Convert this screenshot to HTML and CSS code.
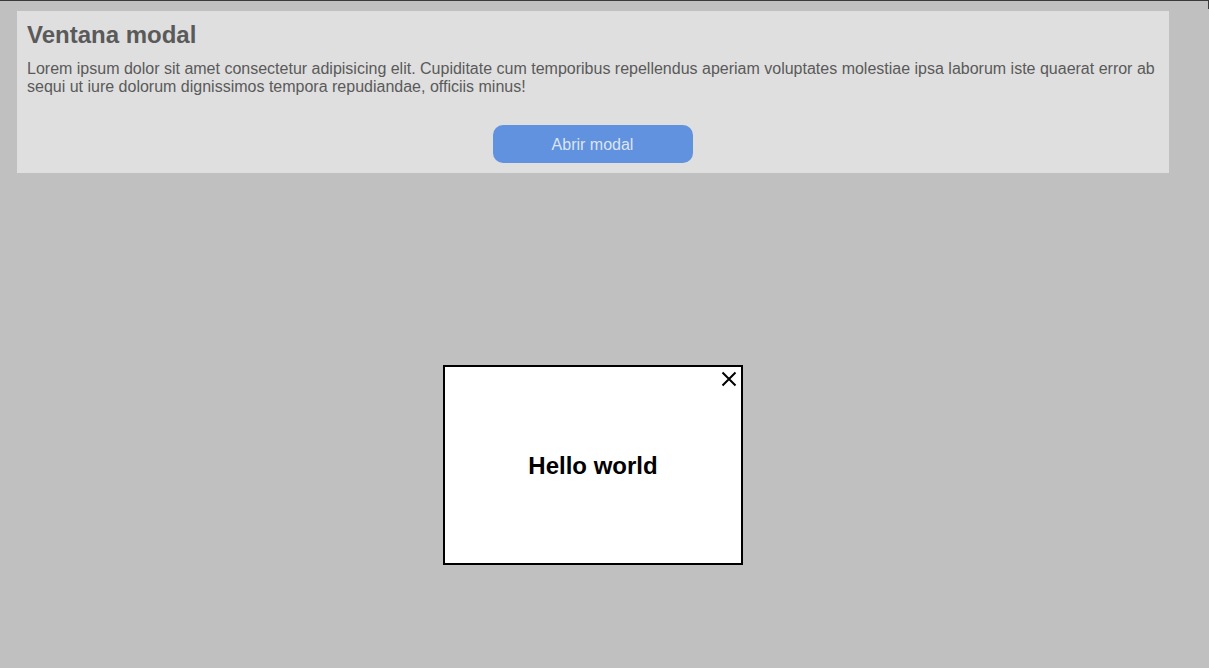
FILE: index.html
```html
<!DOCTYPE html>
<html lang="es">
<head>
<meta charset="utf-8">
<title>Ventana modal</title>
<link rel="stylesheet" href="styles.css">
</head>
<body>
<div class="page">
  <section class="card">
    <h2 class="card-title">Ventana modal</h2>
    <p class="card-text">Lorem ipsum dolor sit amet consectetur adipisicing elit. Cupiditate cum temporibus repellendus aperiam voluptates molestiae ipsa laborum iste quaerat error ab sequi ut iure dolorum dignissimos tempora repudiandae, officiis minus!</p>
    <div class="card-actions">
      <button class="btn-open" type="button">Abrir modal</button>
    </div>
  </section>
</div>
<div class="overlay-edge"></div>
<div class="modal">
  <button class="modal-close" type="button" aria-label="Cerrar">
    <svg width="16" height="16" viewBox="0 0 16 16"><path d="M1.5 1.5 L14.5 14.5 M14.5 1.5 L1.5 14.5" stroke="#000" stroke-width="2" fill="none"/></svg>
  </button>
  <h2 class="modal-title">Hello world</h2>
</div>
</body>
</html>
```
FILE: styles.css
```css
html, body {
  margin: 0;
  padding: 0;
  height: 100%;
}
body {
  background: #c0c0c0;
  font-family: "Liberation Sans", Arial, sans-serif;
  border-top: 1px solid #3a3a3a;
  box-sizing: border-box;
  position: relative;
  overflow: hidden;
}
.page {
  padding: 10px 0 0 17px;
}
.card {
  width: 1152px;
  box-sizing: border-box;
  background: #dfdfdf;
  padding: 10px 10px 10px 10px;
  color: #5a5a5a;
}
.card-title {
  margin: 0;
  font-size: 24px;
  font-weight: bold;
  line-height: 28px;
}
.card-text {
  margin: 11px 0 0 0;
  font-size: 16px;
  line-height: 18px;
}
.card-actions {
  display: flex;
  justify-content: center;
  margin-top: 29px;
}
.btn-open {
  width: 200px;
  height: 38px;
  border: none;
  border-radius: 10px;
  background: #6092e0;
  color: #dde4ef;
  font-family: "Liberation Sans", Arial, sans-serif;
  font-size: 16px;
  padding-top: 2px;
  margin-left: -1px;
}
.overlay-edge {
  position: absolute;
  top: 0;
  right: 0;
  width: 1px;
  height: 8px;
  background: #3a3a3a;
}
.modal {
  position: absolute;
  left: 443px;
  top: 364px;
  width: 300px;
  height: 200px;
  box-sizing: border-box;
  border: 2px solid #000;
  padding-top: 2px;
  background: #fff;
  display: flex;
  align-items: center;
  justify-content: center;
}
.modal-title {
  margin: 0;
  font-size: 24px;
  font-weight: bold;
  color: #000;
}
.modal-close {
  position: absolute;
  top: 4px;
  right: 4px;
  padding: 0;
  border: none;
  background: none;
  width: 16px;
  height: 16px;
  line-height: 0;
}
```
